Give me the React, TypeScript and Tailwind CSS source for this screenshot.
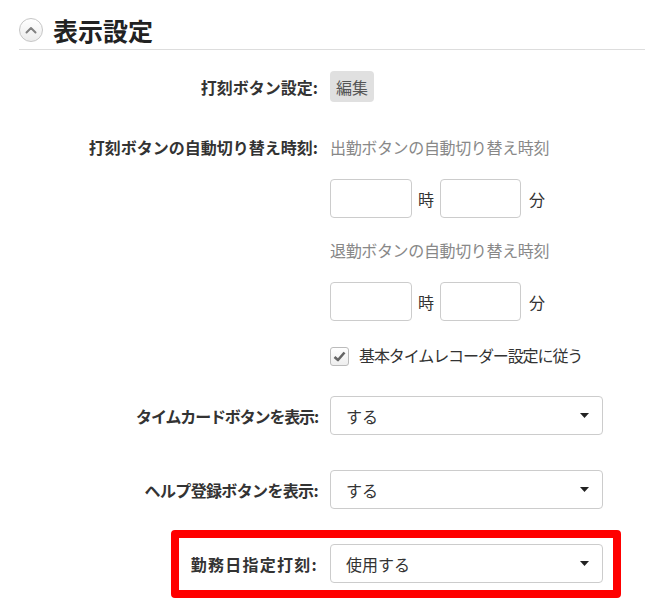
import React from "react";

const font = { fontFamily: '"Noto Sans CJK JP", "Liberation Sans", sans-serif' };

function Caret() {
  return (
    <svg width="9" height="5" viewBox="0 0 9 5" className="shrink-0">
      <path d="M0 0 L9 0 L4.5 5 Z" fill="#222" />
    </svg>
  );
}

function Select({ value }: { value: string }) {
  return (
    <div className="flex h-[39px] w-[273px] items-center justify-between rounded-[4px] border border-[#cccccc] bg-white pl-[15px] pr-[13px] text-[16px] text-[#333]">
      <span>{value}</span>
      <Caret />
    </div>
  );
}

function TimeInputs() {
  return (
    <div className="flex items-center text-[16px] text-[#333]">
      <input className="h-[39px] w-[82px] rounded-[4px] border border-[#cccccc] bg-white outline-none" />
      <span className="mx-[6px]">時</span>
      <input className="h-[39px] w-[81px] rounded-[4px] border border-[#cccccc] bg-white outline-none" />
      <span className="ml-[8px]">分</span>
    </div>
  );
}

export default function App() {
  return (
    <div className="h-[609px] w-[645px] overflow-hidden bg-white pl-[19px] leading-6" style={font}>
      {/* section header */}
      <div className="flex h-[50px] items-center border-b border-[#dddddd] pt-[10px]">
        <span className="flex h-[24px] w-[24px] items-center justify-center rounded-full border-[1.5px] border-[#c6c6c6] bg-gradient-to-b from-white to-[#ececec]">
          <svg width="12" height="8" viewBox="0 0 12 8">
            <path d="M1.5 6.5 L6 2 L10.5 6.5" fill="none" stroke="#808080" strokeWidth="2" strokeLinecap="round" strokeLinejoin="round" />
          </svg>
        </span>
        <h2 className="ml-[10px] text-[25px] font-bold text-[#222]">表示設定</h2>
      </div>

      {/* 打刻ボタン設定 */}
      <div className="mt-[21px] flex items-center gap-[12px]">
        <div className="w-[299px] text-right text-[16px] font-bold text-[#333]">打刻ボタン設定:</div>
        <button className="h-[31px] rounded-[4px] bg-[#e0e0e0] px-[6px] text-[16px] text-[#555]">編集</button>
      </div>

      {/* 自動切り替え時刻 */}
      <div className="mt-[33px] flex items-start gap-[12px]">
        <div className="w-[299px] text-right text-[16px] font-bold text-[#333]">打刻ボタンの自動切り替え時刻:</div>
        <div className="flex flex-col">
          <div className="text-[16px] tracking-[-0.35px] text-[#888]">出勤ボタンの自動切り替え時刻</div>
          <div className="mt-[20px]">
            <TimeInputs />
          </div>
          <div className="mt-[20px] text-[16px] tracking-[-0.35px] text-[#888]">退勤ボタンの自動切り替え時刻</div>
          <div className="mt-[20px]">
            <TimeInputs />
          </div>
          <label className="mt-[23px] flex h-6 items-center">
            <span className="flex h-[19px] w-[19px] items-center justify-center rounded-[3px] border border-[#bbbbbb] bg-gradient-to-b from-white to-[#eeeeee]">
              <svg width="13" height="11" viewBox="0 0 13 11">
                <path d="M1.5 6 L5 9 L11.5 1.5" fill="none" stroke="#666" strokeWidth="2.6" strokeLinejoin="round" />
              </svg>
            </span>
            <span className="ml-[10px] -mt-[3px] text-[16px] tracking-[-1.1px] text-[#333]">基本タイムレコーダー設定に従う</span>
          </label>
        </div>
      </div>

      {/* タイムカードボタン */}
      <div className="mt-[28px] flex items-center gap-[12px]">
        <div className="w-[299px] text-right text-[16px] font-bold tracking-[-1.15px] text-[#333]">タイムカードボタンを表示:</div>
        <Select value="する" />
      </div>

      {/* ヘルプ登録ボタン */}
      <div className="mt-[35px] flex items-center gap-[12px]">
        <div className="w-[299px] text-right text-[16px] font-bold tracking-[-0.65px] text-[#333]">ヘルプ登録ボタンを表示:</div>
        <Select value="する" />
      </div>

      {/* 勤務日指定打刻 (highlighted) */}
      <div className="mt-[21px] ml-[152px] w-[450px] rounded-[4px] border-[8px] border-[#ff0000] pt-[6px] pb-[7px]">
        <div className="flex items-center gap-[12px]">
          <div className="w-[139px] text-right text-[16px] font-bold tracking-[1.25px] text-[#333]">勤務日指定打刻:</div>
          <Select value="使用する" />
        </div>
      </div>
    </div>
  );
}
